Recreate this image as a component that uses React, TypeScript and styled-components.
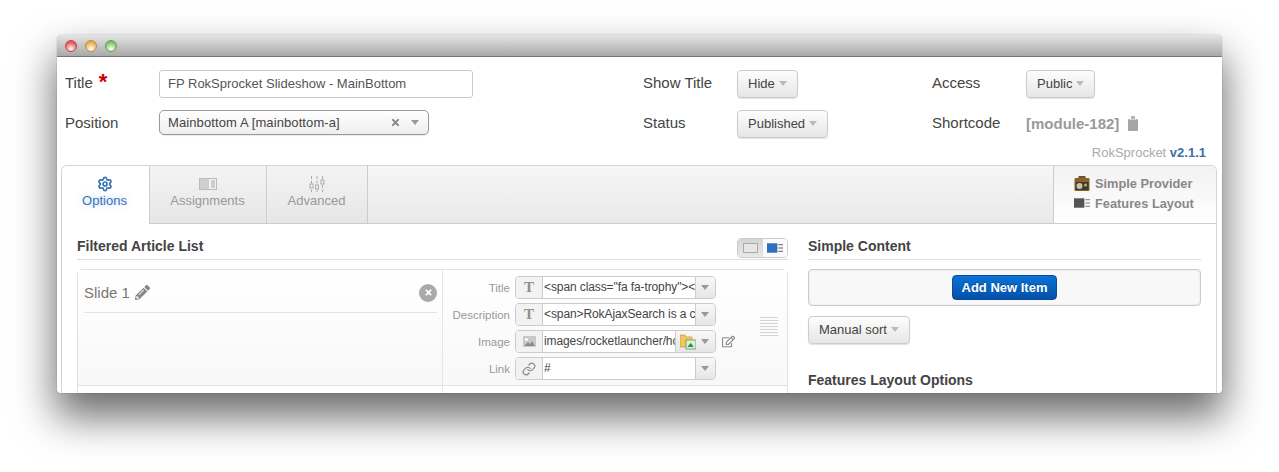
import React from "react";
import styled, { createGlobalStyle } from "styled-components";
import { FaPencilAlt, FaRegEdit, FaTimes } from "react-icons/fa";
import { Link as LinkIcon, Settings } from "lucide-react";

const GlobalStyle = createGlobalStyle`
  html, body {
    margin: 0;
    padding: 0;
    background: #fff;
    overflow: hidden;
  }
  body {
    font-family: "Liberation Sans", Arial, sans-serif;
    color: #444;
  }
`;

const Page = styled.div`
  width: 1279px;
  height: 472px;
  padding: 35px 0 0 57px;
  box-sizing: border-box;
`;

const Window = styled.div`
  width: 1165px;
  height: 358px;
  border-radius: 5px 5px 3px 3px;
  background: #fff;
  overflow: hidden;
  box-shadow: 0 22px 40px 2px rgba(0, 0, 0, 0.58), 0 0 1px 0 rgba(0, 0, 0, 0.6);
`;

const TitleBar = styled.div`
  height: 22px;
  display: flex;
  align-items: center;
  gap: 8px;
  padding: 1px 0 0 8px;
  box-sizing: border-box;
  background: linear-gradient(#e4e4e4, #a9a9a9);
  border-bottom: 1px solid #777;
`;

const Light = styled.span<{ $c: string; $edge: string }>`
  width: 12px;
  height: 12px;
  border-radius: 50%;
  box-sizing: border-box;
  border: 1px solid ${({ $edge }) => $edge};
  background: radial-gradient(circle at 50% 80%, #fff 0, ${({ $c }) => $c} 70%);
`;

const FormGrid = styled.div`
  display: grid;
  grid-template-columns: 94px 484px 94px 195px 94px 1fr;
  grid-auto-rows: 40px;
  align-items: center;
  padding: 7px 0 0 8px;
`;

const Label = styled.div`
  font-size: 15px;
  color: #444;
  display: flex;
  align-items: center;
  gap: 6px;
  padding-bottom: 3px;
`;

const Star = styled.span`
  color: #c00;
  font-weight: bold;
  font-size: 22px;
  line-height: 12px;
  height: 12px;
  margin-top: -1px;
`;

const TextInput = styled.div`
  width: 314px;
  height: 28px;
  box-sizing: border-box;
  border: 1px solid #ccc;
  border-radius: 3px;
  font-size: 13px;
  line-height: 26px;
  padding-left: 8px;
  color: #555;
  background: #fff;
`;

const ChosenSelect = styled.div`
  width: 270px;
  height: 25px;
  margin-top: -3px;
  box-sizing: border-box;
  border: 1px solid #999;
  border-radius: 5px;
  display: flex;
  align-items: center;
  padding: 0 9px 0 8px;
  font-size: 13px;
  letter-spacing: 0.1px;
  color: #444;
  background: linear-gradient(#fff, #eee);
  box-shadow: 0 1px 1px rgba(0, 0, 0, 0.08);
`;

const ChosenText = styled.span`
  flex: 1;
`;

const ChosenClear = styled(FaTimes)`
  color: #8a8a8a;
  font-size: 11px;
  margin-right: 10px;
`;

const Caret = styled.span<{ $dark?: boolean }>`
  display: inline-block;
  width: 0;
  height: 0;
  border-left: 4px solid transparent;
  border-right: 4px solid transparent;
  border-top: 5px solid ${({ $dark }) => ($dark ? "#999" : "#bbb")};
`;

const DropButton = styled.div`
  display: inline-flex;
  align-items: center;
  gap: 4px;
  height: 28px;
  box-sizing: border-box;
  padding: 0 10px 1px;
  width: fit-content;
  border: 1px solid #ccc;
  border-radius: 4px;
  font-size: 13px;
  color: #444;
  background: linear-gradient(#fdfdfd, #e6e6e6);
  box-shadow: 0 1px 1px rgba(0, 0, 0, 0.12);
`;

const ShortCode = styled.div`
  display: flex;
  align-items: center;
  gap: 9px;
  font-size: 15px;
  font-weight: bold;
  color: #999;
  padding-bottom: 1px;
`;

const VersionRow = styled.div`
  text-align: right;
  font-size: 13px;
  color: #aaa;
  padding-right: 16px;
  height: 20px;
  line-height: 16px;
  margin-top: 1px;
`;

const Version = styled.span`
  color: #3f6ea8;
  font-weight: bold;
`;

const Panel = styled.div`
  margin-left: 4px;
  width: 1156px;
  height: 240px;
  box-sizing: border-box;
  border: 1px solid #d5d5d5;
  border-bottom: 0;
  border-radius: 6px 6px 0 0;
`;

const TabBar = styled.div`
  height: 57px;
  display: flex;
  background: linear-gradient(#f6f6f6, #e9e9e9);
  border-bottom: 1px solid #ccc;
  border-radius: 6px 6px 0 0;
`;

const Tab = styled.div<{ $active?: boolean; $w: number }>`
  width: ${({ $w }) => $w}px;
  height: ${({ $active }) => ($active ? 58 : 57)}px;
  box-sizing: border-box;
  border-right: 1px solid #ccc;
  margin-right: 1px;
  display: flex;
  flex-direction: column;
  align-items: center;
  padding: 10px 2px 0 0;
  gap: 1px;
  font-size: 13px;
  color: ${({ $active }) => ($active ? "#3a72b5" : "#999")};
  background: ${({ $active }) =>
    $active ? "#fff" : "linear-gradient(#f4f4f4, #e6e6e6)"};
  border-radius: ${({ $active }) => ($active ? "6px 0 0 0" : "0")};
  text-shadow: ${({ $active }) =>
    $active ? "0 0 6px rgba(90,150,220,.45)" : "none"};
`;

const TabIcon = styled.div`
  height: 16px;
  display: flex;
  align-items: center;
  justify-content: center;
`;

const TabSpacer = styled.div`
  flex: 1;
`;

const ProviderBox = styled.div`
  width: 163px;
  height: 57px;
  box-sizing: border-box;
  border-left: 1px solid #ccc;
  background: linear-gradient(#f2f2f2, #fff);
  border-radius: 0 6px 0 0;
  padding: 9px 0 0 20px;
  display: flex;
  flex-direction: column;
  gap: 4px;
`;

const ProviderRow = styled.div`
  display: flex;
  align-items: center;
  gap: 5px;
  font-size: 12.8px;
  font-weight: bold;
  color: #888;
  height: 16px;
`;

const Columns = styled.div`
  display: grid;
  grid-template-columns: 711px 393px;
  column-gap: 20px;
  padding: 11px 0 0 15px;
`;

const SectionHead = styled.div`
  display: flex;
  align-items: center;
  justify-content: space-between;
  height: 25px;
  box-sizing: border-box;
  border-bottom: 1px solid #ddd;
  font-size: 14px;
  font-weight: bold;
  color: #444;
  padding-bottom: 3px;
`;

const ViewToggle = styled.div`
  display: flex;
  width: 51px;
  height: 20px;
  margin-top: 4px;
  box-sizing: border-box;
  border: 1px solid #ccc;
  border-radius: 4px;
  overflow: hidden;
`;

const ViewOption = styled.div<{ $on?: boolean }>`
  flex: 1;
  display: flex;
  align-items: center;
  justify-content: center;
  background: ${({ $on }) =>
    $on ? "#fbfbfb" : "linear-gradient(#d4d4d4, #e8e8e8)"};
`;

const ItemCard = styled.div`
  margin-top: 9px;
  border: 1px solid #e2e2e2;
  border-radius: 5px 5px 0 0;
  height: 150px;
  box-sizing: border-box;
  background: #fff;
`;

const ItemRow = styled.div`
  display: flex;
  height: 115px;
  border-bottom: 1px solid #e2e2e2;
  background: linear-gradient(#fff, #f8f8f8);
`;

const NextRow = styled.div`
  width: 365px;
  height: 30px;
  box-sizing: border-box;
  border-right: 1px solid #e6e6e6;
`;

const ItemLeft = styled.div`
  width: 365px;
  flex: none;
  box-sizing: border-box;
  border-right: 1px solid #e6e6e6;
  padding: 3px 5px 0 6px;
`;

const ItemHead = styled.div`
  display: flex;
  align-items: center;
  height: 39px;
  border-bottom: 1px solid #e4e4e4;
  font-size: 15px;
  color: #777;
  gap: 5px;
`;

const ItemName = styled.span`
  flex: 1;
  display: flex;
  align-items: center;
  gap: 5px;
`;

const RemoveBadge = styled.span`
  width: 18px;
  height: 18px;
  border-radius: 50%;
  background: #a9a9a9;
  color: #fff;
  display: flex;
  align-items: center;
  justify-content: center;
  font-size: 9px;
`;

const ItemRight = styled.div`
  flex: 1;
  display: flex;
`;

const Fields = styled.div`
  display: flex;
  flex-direction: column;
  gap: 4px;
  padding-top: 6px;
  width: 292px;
`;

const FieldRow = styled.div`
  display: flex;
  align-items: center;
  height: 23px;
`;

const FieldLabel = styled.div`
  width: 67px;
  text-align: right;
  font-size: 11.5px;
  color: #999;
  margin-right: 5px;
`;

const InputGroup = styled.div`
  display: flex;
  width: 201px;
  height: 23px;
  box-sizing: border-box;
  border: 1px solid #ccc;
  border-radius: 4px;
  overflow: hidden;
  background: #fff;
`;

const AddOn = styled.div`
  width: 27px;
  flex: none;
  box-sizing: border-box;
  border-right: 1px solid #ccc;
  background: #f2f2f2;
  display: flex;
  align-items: center;
  justify-content: center;
  color: #8f8f8f;
  font-family: "Liberation Serif", serif;
  font-size: 15px;
  font-weight: bold;
`;

const FieldValue = styled.div`
  flex: 1;
  min-width: 0;
  overflow: hidden;
  white-space: nowrap;
  font-size: 12px;
  letter-spacing: -0.1px;
  line-height: 21px;
  padding-left: 1px;
  color: #444;
`;

const PickerButton = styled.div`
  flex: none;
  height: 100%;
  display: flex;
  align-items: center;
  justify-content: center;
  gap: 5px;
  padding: 0 6px 0 4px;
  min-width: 9px;
  box-sizing: content-box;
  border-left: 1px solid #ccc;
  background: linear-gradient(#f8f8f8, #e6e6e6);
`;

const EditIcon = styled(FaRegEdit)`
  color: #888;
  font-size: 13px;
  margin-left: 6px;
`;

const GripArea = styled.div`
  margin: 47px 0 0 25px;
  width: 18px;
  height: 21px;
  background: repeating-linear-gradient(
    #d4d4d4 0,
    #d4d4d4 1px,
    transparent 1px,
    transparent 3px
  );
`;

const AddBar = styled.div`
  margin-top: 9px;
  height: 37px;
  box-sizing: border-box;
  border: 1px solid #ccc;
  border-radius: 4px;
  background: #f8f8f8;
  display: flex;
  align-items: center;
  justify-content: center;
  box-shadow: inset 0 0 2px rgba(0, 0, 0, 0.12);
`;

const PrimaryButton = styled.div`
  width: 105px;
  height: 25px;
  box-sizing: border-box;
  border: 1px solid #0a4a98;
  border-radius: 4px;
  background: linear-gradient(#0a73d6, #0350a8);
  color: #fff;
  font-size: 13px;
  font-weight: bold;
  line-height: 23px;
  text-align: center;
  text-shadow: 0 -1px 0 rgba(0, 0, 0, 0.25);
`;

const SortRow = styled.div`
  margin-top: 10px;
  display: flex;
`;

const SubHead = styled.div`
  margin-top: 28px;
  font-size: 14px;
  font-weight: bold;
  color: #444;
  line-height: 16px;
`;

const Clipboard = () => (
  <svg width="10" height="15" viewBox="0 0 10 15">
    <rect x="0" y="3" width="10" height="12" rx="1" fill="#a5a5a5" />
    <rect x="3" y="0" width="4" height="4" fill="#b5b5b5" />
    <rect x="1.5" y="3" width="7" height="1" fill="#d5d5d5" />
  </svg>
);

const AssignIcon = () => (
  <svg width="18" height="12" viewBox="0 0 18 12">
    <rect x="0.5" y="0.5" width="17" height="11" fill="#f2f2f2" stroke="#bbb" />
    <rect x="1" y="1" width="9" height="10" fill="#cfcfcf" />
    <path d="M12 3h4M12 5h4M12 7h4M12 9h4" stroke="#aaa" />
  </svg>
);

const SliderIcon = () => (
  <svg width="16" height="16" viewBox="0 0 16 16" stroke="#aaa" fill="#f2f2f2">
    <path d="M2.5 0v16M8 0v16M13.5 0v16" strokeDasharray="3 1.5" />
    <rect x="1" y="8" width="3" height="4" />
    <rect x="6.5" y="9" width="3" height="4" />
    <rect x="12" y="4" width="3" height="4" />
  </svg>
);

const ProviderIcon = () => (
  <svg width="16" height="15" viewBox="0 0 15 15">
    <rect x="4" y="0" width="7" height="3" fill="#6b5230" />
    <rect x="0" y="2" width="15" height="13" rx="1" fill="#8a6128" />
    <rect x="1" y="6" width="13" height="8" fill="#3f3a30" />
    <circle cx="5" cy="10" r="3" fill="#c9c3b0" />
    <circle cx="11" cy="9" r="1.5" fill="#d8b040" />
  </svg>
);

const LayoutIcon = ({ fill = "#555", line = "#777" }: { fill?: string; line?: string }) => (
  <svg width="16" height="10" viewBox="0 0 17 10">
    <rect x="0" y="0" width="11" height="10" fill={fill} />
    <path d="M12 1.5h5M12 5h5M12 8.5h5" stroke={line} />
  </svg>
);

const WideIcon = () => (
  <svg width="15" height="10" viewBox="0 0 15 10">
    <rect x="0.5" y="0.5" width="14" height="9" fill="#e6e6e6" stroke="#aaa" />
  </svg>
);

const ImageIcon = () => (
  <svg width="13" height="11" viewBox="0 0 13 11">
    <rect x="0" y="0" width="13" height="11" fill="#c9c9c9" />
    <circle cx="3.5" cy="3.5" r="1.5" fill="#fff" />
    <path d="M1 10l4-4 2 2 2-3 3 5z" fill="#8c8c8c" />
  </svg>
);

const FolderIcon = () => (
  <svg width="16" height="16" viewBox="0 0 16 16">
    <path d="M0 1h5l1 2h6v10H0z" fill="#f2c75c" stroke="#c99a30" strokeWidth="0.7" />
    <rect x="6" y="6" width="10" height="9" fill="#dff0d0" stroke="#5a9a6a" strokeWidth="0.8" />
    <path d="M7.5 13l3-4 2 2 1 2z" fill="#2f8f4f" />
  </svg>
);

const fields = [
  { label: "Title", icon: "T", value: '<span class="fa fa-trophy"></span>' },
  { label: "Description", icon: "T", value: "<span>RokAjaxSearch is a component" },
  { label: "Image", icon: "img", value: "images/rocketlauncher/home/slides" },
  { label: "Link", icon: "link", value: "#" },
];

const App = () => {
  return (
    <Page>
      <GlobalStyle />
      <Window>
        <TitleBar>
          <Light $c="#e8575a" $edge="#b8494b" />
          <Light $c="#e9ae4a" $edge="#b88a40" />
          <Light $c="#7cc35f" $edge="#6a9c58" />
        </TitleBar>
        <FormGrid>
          <Label>
            Title <Star>*</Star>
          </Label>
          <TextInput>FP RokSprocket Slideshow - MainBottom</TextInput>
          <Label>Show Title</Label>
          <DropButton>
            Hide <Caret />
          </DropButton>
          <Label>Access</Label>
          <DropButton>
            Public <Caret />
          </DropButton>
          <Label>Position</Label>
          <ChosenSelect>
            <ChosenText>Mainbottom A [mainbottom-a]</ChosenText>
            <ChosenClear />
            <Caret $dark />
          </ChosenSelect>
          <Label>Status</Label>
          <DropButton>
            Published <Caret />
          </DropButton>
          <Label>Shortcode</Label>
          <ShortCode>
            [module-182] <Clipboard />
          </ShortCode>
        </FormGrid>
        <VersionRow>
          RokSprocket <Version>v2.1.1</Version>
        </VersionRow>
        <Panel>
          <TabBar>
            <Tab $active $w={88}>
              <TabIcon>
                <Settings size={16} color="#3a72b5" strokeWidth={2.6} />
              </TabIcon>
              Options
            </Tab>
            <Tab $w={116}>
              <TabIcon>
                <AssignIcon />
              </TabIcon>
              Assignments
            </Tab>
            <Tab $w={100}>
              <TabIcon>
                <SliderIcon />
              </TabIcon>
              Advanced
            </Tab>
            <TabSpacer />
            <ProviderBox>
              <ProviderRow>
                <ProviderIcon /> Simple Provider
              </ProviderRow>
              <ProviderRow>
                <LayoutIcon /> Features Layout
              </ProviderRow>
            </ProviderBox>
          </TabBar>
          <Columns>
            <div>
              <SectionHead>
                Filtered Article List
                <ViewToggle>
                  <ViewOption>
                    <WideIcon />
                  </ViewOption>
                  <ViewOption $on>
                    <LayoutIcon fill="#2f6fc0" line="#555" />
                  </ViewOption>
                </ViewToggle>
              </SectionHead>
              <ItemCard>
                <ItemRow>
                  <ItemLeft>
                    <ItemHead>
                      <ItemName>
                        Slide 1 <FaPencilAlt size={15} color="#888" />
                      </ItemName>
                      <RemoveBadge>
                        <FaTimes />
                      </RemoveBadge>
                    </ItemHead>
                  </ItemLeft>
                  <ItemRight>
                    <Fields>
                      {fields.map(f => (
                        <FieldRow key={f.label}>
                          <FieldLabel>{f.label}</FieldLabel>
                          <InputGroup>
                            <AddOn>
                              {f.icon === "T" && "T"}
                              {f.icon === "img" && <ImageIcon />}
                              {f.icon === "link" && <LinkIcon size={14} color="#888" />}
                            </AddOn>
                            <FieldValue>{f.value}</FieldValue>
                            <PickerButton>
                              {f.icon === "img" && <FolderIcon />}
                              <Caret $dark />
                            </PickerButton>
                          </InputGroup>
                          {f.icon === "img" && <EditIcon />}
                        </FieldRow>
                      ))}
                    </Fields>
                    <GripArea />
                  </ItemRight>
                </ItemRow>
                <NextRow />
              </ItemCard>
            </div>
            <div>
              <SectionHead>Simple Content</SectionHead>
              <AddBar>
                <PrimaryButton>Add New Item</PrimaryButton>
              </AddBar>
              <SortRow>
                <DropButton>
                  Manual sort <Caret />
                </DropButton>
              </SortRow>
              <SubHead>Features Layout Options</SubHead>
            </div>
          </Columns>
        </Panel>
      </Window>
    </Page>
  );
};

export default App;
